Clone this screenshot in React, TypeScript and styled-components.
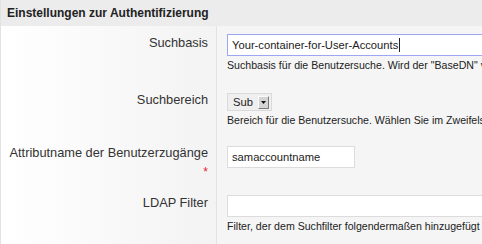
import React from 'react';
import styled, { createGlobalStyle } from 'styled-components';

const GlobalStyle = createGlobalStyle`
  html, body {
    margin: 0;
    padding: 0;
    background: #f5f5f5;
    overflow: hidden;
  }
  body {
    font-family: "Liberation Sans", Arial, sans-serif;
    color: #333;
  }
`;

const Panel = styled.section`
  width: 760px;
  background: #f5f5f5;
  border-left: 1px solid #e2e2e2;
`;

const Header = styled.h2`
  margin: 0;
  height: 26px;
  padding: 0 6px;
  display: flex;
  align-items: center;
  background: #ececec;
  font-size: 12px;
  font-weight: bold;
  color: #222;
`;

const Row = styled.div<{ $height: number }>`
  display: grid;
  grid-template-columns: 216px 1fr;
  grid-template-rows: ${p => p.$height}px;
`;

const LabelCell = styled.label<{ $top: number }>`
  display: flex;
  flex-direction: column;
  align-items: flex-end;
  padding: ${p => p.$top}px 8px 0 0;
  background: linear-gradient(to right, #ffffff, #f3f3f3);
  border-right: 1px solid #e3e3e3;
  font-size: 12.8px;
  line-height: 16px;
  color: #333;
`;

const Required = styled.span`
  color: #e4222b;
  font-size: 12px;
  line-height: 12px;
  margin-top: 5px;
`;

const FieldCell = styled.div<{ $top: number }>`
  padding: ${p => p.$top}px 0 0 10px;
  display: flex;
  flex-direction: column;
  align-items: flex-start;
  overflow: hidden;
`;

const TextInput = styled.input<{ $width: number }>`
  box-sizing: border-box;
  width: ${p => p.$width}px;
  height: 22px;
  margin: 0;
  padding: 0 4px;
  border: 1px solid #dcdcdc;
  background: #fff;
  font-family: "Liberation Sans", Arial, sans-serif;
  font-size: 11.2px;
  color: #222;
  outline: none;
`;

const FakeInput = styled.div<{ $width: number }>`
  box-sizing: border-box;
  width: ${p => p.$width}px;
  height: 22px;
  padding: 0 4px;
  display: flex;
  align-items: center;
  border: 1px solid #9ea6f2;
  background: #fff;
  font-size: 11.2px;
  color: #222;
  white-space: nowrap;
`;

const Caret = styled.span`
  display: inline-block;
  width: 1px;
  height: 14px;
  background: #222;
  margin-left: 1px;
`;

const Select = styled.div`
  box-sizing: border-box;
  width: 45px;
  min-width: 45px;
  height: 18px;
  display: flex;
  align-items: center;
  justify-content: space-between;
  padding: 0 2px 0 5px;
  border: 1px solid #dadada;
  background: #efefef;
  font-size: 11.2px;
  color: #222;
`;

const ArrowBox = styled.span`
  box-sizing: border-box;
  width: 11px;
  height: 13px;
  display: flex;
  align-items: center;
  justify-content: center;
  background: #d4d4d4;
  border-top: 1px solid #fafafa;
  border-left: 1px solid #fafafa;
  border-right: 1px solid #7a7a7a;
  border-bottom: 1px solid #7a7a7a;
`;

const Help = styled.div`
  margin-top: 3px;
  font-size: 10.6px;
  line-height: 13px;
  color: #222;
  white-space: nowrap;
`;

export default function App() {
  return (
    <>
      <GlobalStyle />
      <Panel>
        <Header>Einstellungen zur Authentifizierung</Header>

        <Row $height={58}>
          <LabelCell $top={9}>Suchbasis</LabelCell>
          <FieldCell $top={8}>
            <FakeInput $width={320}>
              Your-container-for-User-Accounts
              <Caret />
            </FakeInput>
            <Help>Suchbasis für die Benutzersuche. Wird der "BaseDN" verwendet, wenn das Feld leer bleibt.</Help>
          </FieldCell>
        </Row>

        <Row $height={53}>
          <LabelCell $top={8}>Suchbereich</LabelCell>
          <FieldCell $top={9}>
            <Select>
              Sub
              <ArrowBox>
                <svg width="5" height="3" viewBox="0 0 5 3">
                  <path d="M0 0h5L2.5 3z" fill="#111" />
                </svg>
              </ArrowBox>
            </Select>
            <Help>Bereich für die Benutzersuche. Wählen Sie im Zweifelsfall "Sub".</Help>
          </FieldCell>
        </Row>

        <Row $height={49}>
          <LabelCell $top={8}>
            Attributname der Benutzerzugänge
            <Required>*</Required>
          </LabelCell>
          <FieldCell $top={9}>
            <TextInput $width={128} defaultValue="samaccountname" />
          </FieldCell>
        </Row>

        <Row $height={70}>
          <LabelCell $top={9}>LDAP Filter</LabelCell>
          <FieldCell $top={9}>
            <TextInput $width={320} defaultValue="" />
            <Help>Filter, der dem Suchfilter folgendermaßen hinzugefügt wird: (&amp;(Suchfilter)(LDAP Filter))</Help>
          </FieldCell>
        </Row>
      </Panel>
    </>
  );
}
